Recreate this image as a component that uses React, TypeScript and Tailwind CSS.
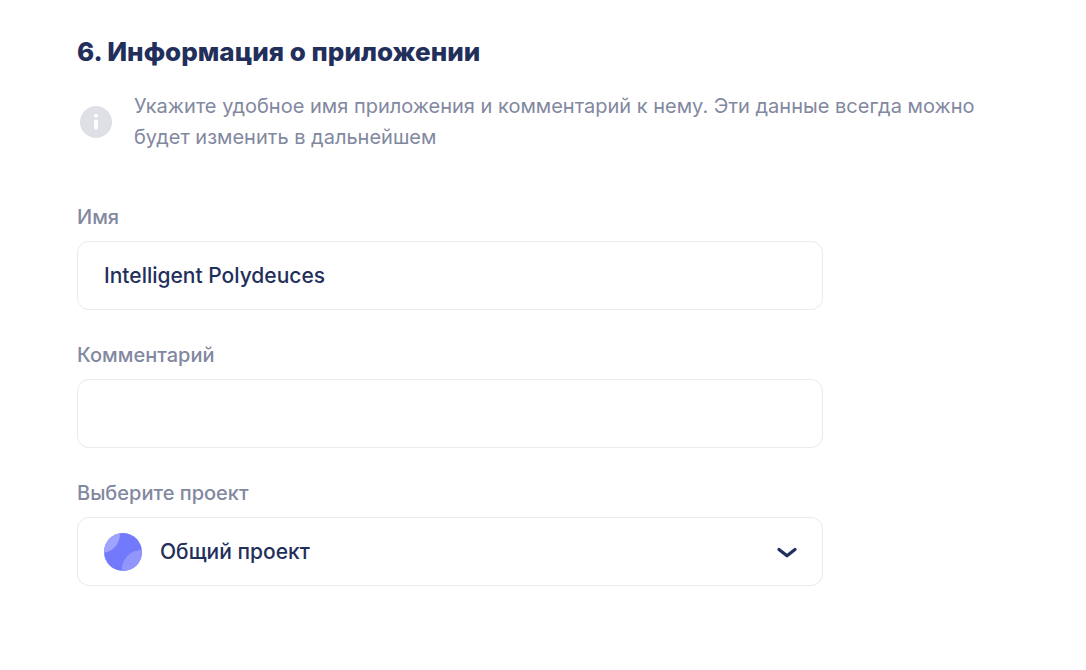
import * as React from "react";

const PROJECTS = [{ id: "common", name: "Общий проект" }];

const CONTROL =
  "h-[69px] w-full rounded-xl border border-[#e9eaee] bg-white text-[21px] font-medium text-[#232f5b] outline-none focus:border-[#7178fb]";

function InfoIcon() {
  return (
    <svg className="size-8 shrink-0" viewBox="0 0 32 32" aria-hidden="true">
      <circle cx="16" cy="16" r="16" fill="#dfe0e6" />
      <circle cx="16" cy="9.7" r="1.9" fill="#fff" />
      <rect x="14.1" y="13.8" width="3.8" height="9.8" rx="1.7" fill="#fff" />
    </svg>
  );
}

function ProjectIcon() {
  return (
    <svg className="size-[38px]" viewBox="0 0 38 38" aria-hidden="true">
      <defs>
        <clipPath id="project-ball">
          <circle cx="19" cy="19" r="19" />
        </clipPath>
      </defs>
      <g clipPath="url(#project-ball)">
        <rect width="38" height="38" fill="#7379fb" />
        <circle cx="-3" cy="1" r="19" fill="#9fa3fc" />
        <circle cx="38" cy="37" r="20.3" fill="#9195fc" />
      </g>
    </svg>
  );
}

function Chevron() {
  return (
    <svg className="h-3 w-5" viewBox="0 0 20 12" fill="none" aria-hidden="true">
      <path d="M2 3.5 10 9.8 18 3.5" stroke="#232f5b" strokeWidth="3.2" strokeLinecap="round" strokeLinejoin="round" />
    </svg>
  );
}

function Field({ id, label, children }: { id: string; label: string; children: React.ReactNode }) {
  return (
    <div>
      <label htmlFor={id} className="mb-3 block text-[20px] leading-6 font-medium text-[#8288a0]">
        {label}
      </label>
      {children}
    </div>
  );
}

export default function App() {
  const [name, setName] = React.useState("Intelligent Polydeuces");
  const [comment, setComment] = React.useState("");
  const [project, setProject] = React.useState("common");

  return (
    <main className="min-h-screen bg-white px-[77px] pt-[34px] pb-20 font-['Inter','Noto_Sans',sans-serif]">
      <h2 className="text-[26px] leading-9 font-extrabold text-[#232f5b]">6. Информация о приложении</h2>

      <div className="mt-[21px] flex items-center gap-[22px] pl-[3px]">
        <InfoIcon />
        <p className="max-w-[850px] text-[20px] leading-[31px] text-[#8288a0]">
          Укажите удобное имя приложения и комментарий к нему. Эти данные всегда можно будет изменить в дальнейшем
        </p>
      </div>

      <form className="mt-[52px] flex max-w-[746px] flex-col gap-[33px]" onSubmit={(e) => e.preventDefault()}>
        <Field id="app-name" label="Имя">
          <input
            id="app-name"
            type="text"
            value={name}
            onChange={(e) => setName(e.target.value)}
            className={`${CONTROL} block px-[26px]`}
          />
        </Field>

        <Field id="app-comment" label="Комментарий">
          <input
            id="app-comment"
            type="text"
            value={comment}
            onChange={(e) => setComment(e.target.value)}
            className={`${CONTROL} block px-[26px]`}
          />
        </Field>

        <Field id="app-project" label="Выберите проект">
          <div className="relative">
            <select
              id="app-project"
              value={project}
              onChange={(e) => setProject(e.target.value)}
              className={`${CONTROL} block appearance-none pr-16 pl-[82px]`}
            >
              {PROJECTS.map((p) => (
                <option key={p.id} value={p.id}>{p.name}</option>
              ))}
            </select>
            <div className="pointer-events-none absolute inset-0 flex items-center justify-between pr-[26px] pl-[27px]">
              <ProjectIcon />
              <Chevron />
            </div>
          </div>
        </Field>
      </form>
    </main>
  );
}
